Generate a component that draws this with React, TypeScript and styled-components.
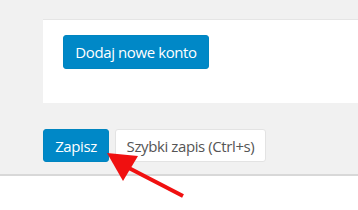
import React from 'react';
import styled, { createGlobalStyle } from 'styled-components';

const Global = createGlobalStyle`
  html, body {
    margin: 0;
    padding: 0;
    background: #fff;
    font-family: "Open Sans", "Liberation Sans", sans-serif;
  }
`;

const Page = styled.div`
  position: relative;
  width: 358px;
  height: 210px;
  overflow: hidden;
  display: flex;
  flex-direction: column;
`;

const Content = styled.div`
  background: #f1f1f1;
  padding: 19px 0 12px 43px;
  border-bottom: 2px solid #d8d8d8;
`;

const Panel = styled.div`
  background: #fff;
  border-top: 1px solid #e5e5e5;
  padding: 15px 20px 0;
  box-sizing: border-box;
  height: 84px;
`;

const Actions = styled.div`
  display: flex;
  gap: 6px;
  margin-top: 26px;
`;

const Button = styled.button<{ $primary?: boolean; $w: number; $h?: number }>`
  width: ${(p) => p.$w}px;
  height: ${(p) => p.$h ?? 33}px;
  padding: 0;
  font-family: "Open Sans", "Liberation Sans", sans-serif;
  font-size: 15px;
  letter-spacing: -0.4px;
  border-radius: 3px;
  cursor: pointer;
  background: ${(p) => (p.$primary ? '#0088c7' : '#fff')};
  color: ${(p) => (p.$primary ? '#fff' : '#555')};
  border: 1px solid ${(p) => (p.$primary ? '#0085c0' : '#e3e3e3')};
`;

const Arrow = styled.svg`
  position: absolute;
  left: 0;
  top: 0;
  pointer-events: none;
`;

export default function App() {
  return (
    <Page>
      <Global />
      <Content>
        <Panel>
          <Button $primary $w={146} $h={34}>Dodaj nowe konto</Button>
        </Panel>
        <Actions>
          <Button $primary $w={66}>Zapisz</Button>
          <Button $w={151}>Szybki zapis (Ctrl+s)</Button>
        </Actions>
      </Content>
      <Arrow width="358" height="210" viewBox="0 0 358 210">
        <line x1="183" y1="196" x2="125" y2="166" stroke="#f01010" strokeWidth="4" />
        <polygon points="107,153 138,156 123,181" fill="#f01010" />
      </Arrow>
    </Page>
  );
}
